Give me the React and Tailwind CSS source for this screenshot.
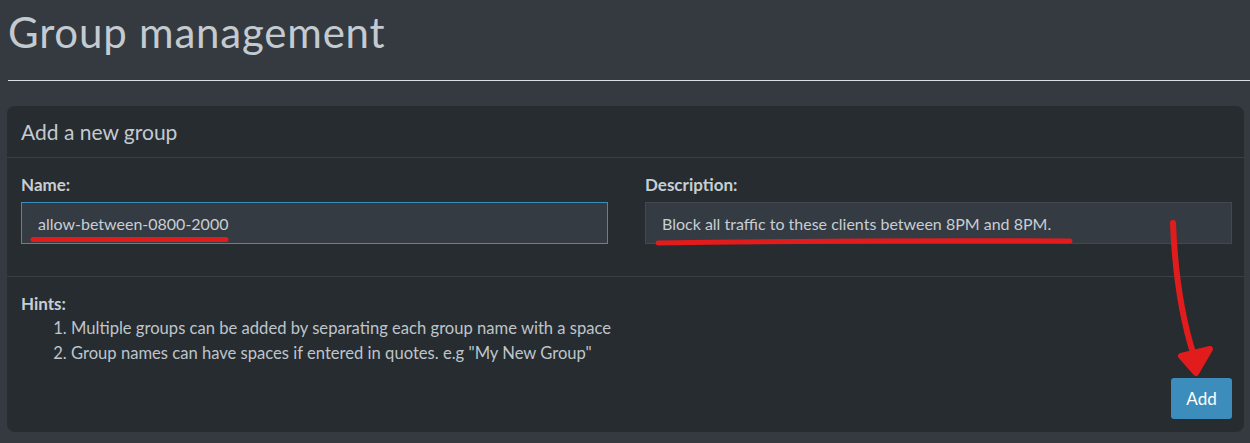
import { useState } from "react";

const Annotations = () => (
  <svg
    className="absolute left-0 top-0 pointer-events-none"
    width="1250"
    height="443"
    viewBox="0 0 1250 443"
  >
    <g stroke="#e21c1c" fill="none" strokeLinecap="round" strokeLinejoin="round">
      <path d="M33 239.5 L226 239.5" strokeWidth="5" />
      <path d="M658 243 Q860 240 1070 241" strokeWidth="5" />
      <path d="M1173 223 Q1176 300 1194 356" strokeWidth="6" />
      <path
        d="M1181 356 L1210 349 L1196 373 Z"
        fill="#e21c1c"
        strokeWidth="6"
      />
    </g>
  </svg>
);

export default function App() {
  const [name, setName] = useState("allow-between-0800-2000");
  const [desc, setDesc] = useState(
    "Block all traffic to these clients between 8PM and 8PM."
  );

  return (
    <div
      className="relative h-[443px] w-[1250px] overflow-hidden bg-[#343a40] text-[#bec5cb]"
      style={{ fontFamily: "Lato, 'Noto Sans', sans-serif" }}
    >
      <h1 className="pl-[8px] pt-[8px] text-[42px] leading-[48px] font-normal tracking-[0.8px] text-[#c3cad0]">
        Group management
      </h1>
      <div className="ml-[8px] mt-[24px] h-px bg-[#dcdfe2]" />

      <div className="ml-[7px] mt-[25px] w-[1237px] rounded-lg bg-[#272c30]">
        <div className="flex h-[52px] items-center border-b border-[#393f45] px-[14px]">
          <h3 className="text-[21px] text-[#c3cad0]">Add a new group</h3>
        </div>

        <div className="grid grid-cols-2 gap-[37px] border-b border-[#393f45] pl-[14px] pr-[12px] pb-[32px] pt-[16px]">
          <div>
            <label className="block text-[17px] font-bold leading-[22px] text-[#c7ced4]">
              Name:
            </label>
            <input
              value={name}
              onChange={(e) => setName(e.target.value)}
              className="mt-[6px] h-[42px] w-full border border-[#3c8dbc] bg-[#353b42] px-[16px] text-[16px] text-[#c7ced4] outline-none"
            />
          </div>
          <div>
            <label className="block text-[17px] font-bold leading-[22px] text-[#c7ced4]">
              Description:
            </label>
            <input
              value={desc}
              onChange={(e) => setDesc(e.target.value)}
              className="mt-[6px] h-[42px] w-full border border-[#42484e] bg-[#353b42] px-[16px] text-[16px] text-[#c7ced4] outline-none"
            />
          </div>
        </div>

        <div className="pl-[14px] pr-[12px] pb-[13px] pt-[14px]">
          <div className="text-[16.6px] leading-[25px]">
            <div className="text-[17px] font-bold text-[#c7ced4]">Hints:</div>
            <ol className="list-decimal pl-[50px]">
              <li>Multiple groups can be added by separating each group name with a space</li>
              <li>Group names can have spaces if entered in quotes. e.g "My New Group"</li>
            </ol>
          </div>
          <div className="mt-[12px] flex justify-end">
            <button className="h-[41px] w-[61px] rounded-[3px] bg-[#3c8dbc] text-[17px] text-white">
              Add
            </button>
          </div>
        </div>
      </div>

      <Annotations />
    </div>
  );
}
